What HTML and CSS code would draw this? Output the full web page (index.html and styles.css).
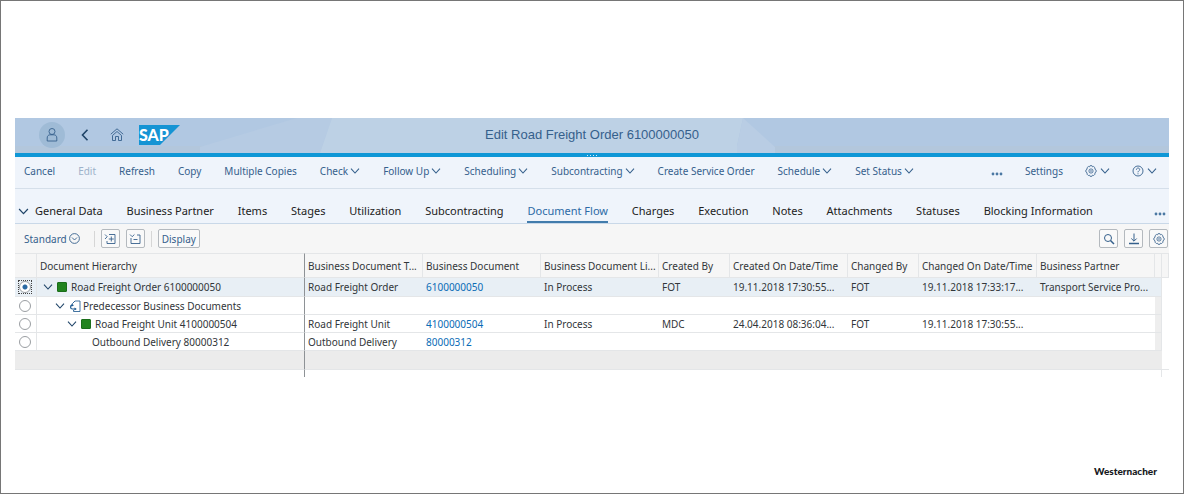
FILE: index.html
```html
<!DOCTYPE html>
<html lang="en">
<head>
<meta charset="utf-8">
<title>Edit Road Freight Order 6100000050</title>
<link rel="stylesheet" href="styles.css">
</head>
<body>
<svg class="defs" aria-hidden="true">
  <symbol id="chev" viewBox="0 0 10 6"><path d="M1 .7l4 4.3 4-4.3" fill="none" stroke="currentColor" stroke-width="1.1"/></symbol>
  <symbol id="gear" viewBox="0 0 12 12"><g fill="none" stroke="currentColor" stroke-width=".8"><path d="M5 .7h2l.5 1.1 1.2-.3 1.4 1.4-.3 1.2 1.3.9v2l-1.3.9.3 1.2-1.4 1.4-1.2-.3L7 11.3H5l-.5-1.1-1.2.3-1.4-1.4.3-1.2L.9 7V5l1.3-.9-.3-1.2 1.4-1.4 1.2.3z"/><circle cx="6" cy="6" r="2.1"/><circle cx="6" cy="6" r=".4"/></g></symbol>
  <symbol id="dots" viewBox="0 0 12 4"><g fill="currentColor"><circle cx="2" cy="2" r="1.4"/><circle cx="6" cy="2" r="1.4"/><circle cx="10" cy="2" r="1.4"/></g></symbol>
</svg>
<div class="slide">
  <main class="app">
    <header class="shell">
      <svg class="shell-bg" viewBox="0 0 1154 35" preserveAspectRatio="none" aria-hidden="true">
        <path d="M185 29L282 0h35l-12 35H185z" fill="#b6cbe3"/>
        <path d="M317 0h411l-6 28v7H305z" fill="#bdd1e5"/>
        <path d="M728 0l32 29v6h-38v-7z" fill="#b9cde4"/>
      </svg>
      <nav class="shell-nav">
        <button class="avatar" aria-label="User"><svg width="14" height="16" viewBox="0 0 14 16"><g fill="none" stroke="currentColor" stroke-width=".9"><circle cx="7" cy="4.5" r="3"/><path d="M2.2 14V11c0-2 1-3 2.700-3.200h4.200C10.800 8 11.800 9 11.800 11v3z"/></g></svg></button>
        <button class="bare back" aria-label="Back"><svg width="8" height="12" viewBox="0 0 8 12"><path d="M6.500 .8L1.500 6l5 5.200" fill="none" stroke="currentColor" stroke-width="1.600"/></svg></button>
        <button class="bare" aria-label="Home"><svg width="14" height="14" viewBox="0 0 14 14"><g fill="none" stroke="currentColor" stroke-width=".9"><path d="M.8 6.200L7 .8l6.200 5.400M2.500 7.500V12.500h3V8.500h3v4h3V7.500L7 3.500z"/></g></svg></button>
        <svg class="logo" width="41" height="20" viewBox="0 0 41 20" role="img" aria-label="SAP"><path d="M0 0h41L21 20H0z" fill="#1594d4"/><text class="logo-text" x="0" y="16">SAP</text></svg>
      </nav>
      <h1 class="title">Edit Road Freight Order 6100000050</h1>
    </header>
    <div class="band"><i></i><i></i><i></i><i></i></div>

    <div class="actions">
      <div class="action-list">
        <button class="bare">Cancel</button>
        <button class="bare" disabled>Edit</button>
        <button class="bare">Refresh</button>
        <button class="bare">Copy</button>
        <button class="bare">Multiple Copies</button>
        <button class="bare">Check<svg class="chev"><use href="#chev"/></svg></button>
        <button class="bare">Follow Up<svg class="chev"><use href="#chev"/></svg></button>
        <button class="bare">Scheduling<svg class="chev"><use href="#chev"/></svg></button>
        <button class="bare">Subcontracting<svg class="chev"><use href="#chev"/></svg></button>
        <button class="bare">Create Service Order</button>
        <button class="bare">Schedule<svg class="chev"><use href="#chev"/></svg></button>
        <button class="bare">Set Status<svg class="chev"><use href="#chev"/></svg></button>
      </div>
      <div class="action-end">
        <button class="bare more" aria-label="More"><svg class="dots"><use href="#dots"/></svg></button>
        <button class="bare">Settings</button>
        <button class="bare" aria-label="Configuration"><svg class="ico"><use href="#gear"/></svg><svg class="chev"><use href="#chev"/></svg></button>
        <button class="bare" aria-label="Help"><svg class="ico" viewBox="0 0 12 12"><g fill="none" stroke="currentColor" stroke-width=".9"><circle cx="6" cy="6" r="5"/><path d="M4.400 4.700c0-2.200 3.300-2.200 3.300-.1C7.700 5.800 6 5.900 6 7.300M6 8.300v1"/></g></svg><svg class="chev"><use href="#chev"/></svg></button>
      </div>
    </div>

    <nav class="tabs">
      <button class="bare expand" aria-label="Expand"><svg class="tabchev"><use href="#chev"/></svg></button>
      <div class="tab-list">
        <a href="#">General Data</a>
        <a href="#">Business Partner</a>
        <a href="#">Items</a>
        <a href="#">Stages</a>
        <a href="#">Utilization</a>
        <a href="#">Subcontracting</a>
        <a href="#" class="active" aria-current="page">Document Flow</a>
        <a href="#">Charges</a>
        <a href="#">Execution</a>
        <a href="#">Notes</a>
        <a href="#">Attachments</a>
        <a href="#">Statuses</a>
        <a href="#">Blocking Information</a>
      </div>
      <button class="bare more" aria-label="More tabs"><svg class="dots"><use href="#dots"/></svg></button>
    </nav>

    <div class="tools">
      <button class="bare view">Standard<svg width="11" height="11" viewBox="0 0 11 11"><g fill="none" stroke="currentColor" stroke-width=".9"><circle cx="5.500" cy="5.500" r="4.900"/><path d="M3 4.500l2.500 2.500L8 4.500"/></g></svg></button>
      <span class="rule"></span>
      <button class="box" aria-label="Expand all"><svg class="ico" viewBox="0 0 12 12"><path d="M5 1.500h6v9H3V8M1 1.500L3.200 3.700 1 6M7.300 3.500v5M4.800 6h5" fill="none" stroke="currentColor" stroke-width=".9"/></svg></button>
      <button class="box" aria-label="Collapse all"><svg class="ico" viewBox="0 0 12 12"><path d="M8 2h3v8.500H2V5M1 1.500l2.200 2.200 2.200-2.200M4.500 6.500h4" fill="none" stroke="currentColor" stroke-width=".9"/></svg></button>
      <span class="rule near"></span>
      <button class="box wide">Display</button>
      <span class="spacer"></span>
      <button class="box" aria-label="Search"><svg class="ico" viewBox="0 0 12 12"><g fill="none" stroke="currentColor"><circle cx="5" cy="5" r="3.500"/><path d="M7.500 7.500L11 11" stroke-width="1.500"/></g></svg></button>
      <button class="box" aria-label="Export"><svg class="ico" viewBox="0 0 12 12"><path d="M6 .5v7.500M3.300 5.500L6 8.200l2.700-2.700" fill="none" stroke="currentColor"/><path d="M1 10.500h10" stroke="currentColor" stroke-width="1.500"/></svg></button>
      <button class="box" aria-label="Table settings"><svg class="ico"><use href="#gear"/></svg></button>
    </div>

    <div class="grid">
      <table class="docs">
        <colgroup><col class="c-sel"><col><col class="c-l"><col class="c-l"><col class="c-l"><col class="c-s"><col class="c-l"><col class="c-s"><col class="c-l"><col class="c-l"><col class="c-bar"><col class="c-edge"></colgroup>
        <thead>
          <tr><th></th><th class="hier">Document Hierarchy</th><th>Business Document T...</th><th>Business Document</th><th>Business Document Li...</th><th>Created By</th><th>Created On Date/Time</th><th>Changed By</th><th>Changed On Date/Time</th><th>Business Partner</th><th class="bar"></th><th></th></tr>
        </thead>
        <tbody>
          <tr class="selected"><td class="sel"><label class="focus"><input type="radio" name="row" aria-label="Road Freight Order 6100000050" checked></label></td><td class="hier"><div class="node l1"><svg class="treechev"><use href="#chev"/></svg><span class="sq"></span>Road Freight Order 6100000050</div></td><td>Road Freight Order</td><td><a href="#">6100000050</a></td><td>In Process</td><td>FOT</td><td>19.11.2018 17:30:55...</td><td>FOT</td><td>19.11.2018 17:33:17...</td><td>Transport Service Pro...</td><td class="bar"></td><td class="edge"></td></tr>
          <tr><td class="sel"><input type="radio" name="row" aria-label="Predecessor Business Documents"></td><td class="hier"><div class="node l2"><svg class="treechev"><use href="#chev"/></svg><svg class="doc" viewBox="0 0 12 12"><path d="M6 1h5v10.500H4.500V10" fill="none" stroke="#2f6496" stroke-width=".9"/><path d="M6 1L3.500 3.500v1" fill="none" stroke="#2f6496"/><path d="M6.500 9H3.500C1 9 1 5.500 3 5.200" fill="none" stroke="#1f5b91" stroke-width="1.200"/><path d="M2.500 3.800L5 5.300 2.500 6.800zM5.500 7.500L7.800 9 5.500 10.500z" fill="#1f5b91"/></svg>Predecessor Business Documents</div></td><td></td><td></td><td></td><td></td><td></td><td></td><td></td><td></td><td class="bar"></td><td class="edge"></td></tr>
          <tr><td class="sel"><input type="radio" name="row" aria-label="Road Freight Unit 4100000504"></td><td class="hier"><div class="node l3"><svg class="treechev"><use href="#chev"/></svg><span class="sq"></span>Road Freight Unit 4100000504</div></td><td>Road Freight Unit</td><td><a href="#">4100000504</a></td><td>In Process</td><td>MDC</td><td>24.04.2018 08:36:04...</td><td>FOT</td><td>19.11.2018 17:30:55...</td><td></td><td class="bar"></td><td class="edge"></td></tr>
          <tr><td class="sel"><input type="radio" name="row" aria-label="Outbound Delivery 80000312"></td><td class="hier"><div class="node l4">Outbound Delivery 80000312</div></td><td>Outbound Delivery</td><td><a href="#">80000312</a></td><td></td><td></td><td></td><td></td><td></td><td></td><td class="bar"></td><td class="edge"></td></tr>
        </tbody>
        <tfoot>
          <tr class="scroll"><td></td><td class="hier"></td><td colspan="9"></td><td class="edge"></td></tr>
          <tr class="tail"><td></td><td class="hier"></td><td colspan="9" class="tail-end"></td><td></td></tr>
        </tfoot>
      </table>
    </div>
  </main>
  <footer class="brand">Westernacher</footer>
</div>
</body>
</html>
```
FILE: styles.css
```css
:root {
  --ui: "Noto Sans", "Liberation Sans", sans-serif;
  --blue: #35608c;
  --text: #32363a;
  --line: #e4e6e8;
}
* { box-sizing: border-box; }
body { margin: 0; background: #fff; color: var(--text); font: 10px/16px var(--ui); }
.defs { position: absolute; width: 0; height: 0; }
.slide { min-height: 100vh; display: flex; flex-direction: column; border: 1px solid #767676; padding: 117px 14px 14px; }
button { font: inherit; color: inherit; margin: 0; cursor: pointer; white-space: nowrap; }
a { text-decoration: none; color: inherit; }
svg { flex: none; }
.bare { display: flex; align-items: center; gap: 2px; border: 0; padding: 0; background: none; }
.bare:disabled { color: #9db2ca; }

.shell { position: relative; display: grid; grid-template-columns: 1fr auto 1fr; align-items: center; height: 35px; padding: 0 24px 2px; background: linear-gradient(#b1c8e2 28px, #b3c7dc 28px); color: var(--blue); }
.shell-bg { position: absolute; inset: 0; width: 100%; height: 100%; }
.shell-nav { position: relative; display: flex; align-items: center; }
.avatar { display: grid; place-items: center; width: 26px; height: 26px; padding: 0; border: 0; border-radius: 50%; background: #9fbbd6; }
.back { margin: 0 21px 0 16px; color: #1f4468; }
.logo { margin-left: 15px; }
.logo-text { font: 900 16px Lato, sans-serif; fill: #fff; }
.title { position: relative; margin: 0; font: 400 13px/16px "Liberation Sans", Arial, sans-serif; }

.band { display: flex; justify-content: center; align-items: center; gap: 2px; height: 4px; background: #0f97d6; }
.band i { width: 1px; height: 1px; background: #d4ecf8; }

.actions { display: flex; justify-content: space-between; height: 32px; padding: 0 12px 4px 9px; background: #eff4fb; border-bottom: 1px solid #d5dfea; color: var(--blue); }
.action-list { display: flex; justify-content: space-between; flex: 0 1 890px; }
.action-end { display: flex; gap: 22px; }
.action-end .bare { gap: 3px; }
.chev { width: 10px; height: 6px; }
.ico { width: 12px; height: 12px; }
.dots { width: 12px; height: 4px; }
.more { padding-top: 6px; color: #4b78a3; }

.tabs { display: flex; align-items: stretch; height: 35px; padding: 0 3px; background: #eff4fb; border-bottom: 1px solid #c9d8e8; font-size: 11px; }
.expand { width: 17px; padding-top: 10px; color: #1f4468; }
.tabchev { width: 11px; height: 7px; }
.tab-list { display: flex; justify-content: space-between; flex: 0 1 1058px; }
.tab-list a { display: flex; align-items: flex-end; padding-bottom: 2px; border-bottom: 2px solid transparent; white-space: nowrap; color: #222; }
.tab-list .active { color: #2d6aa6; border-color: #427cac; }
.tabs .more { margin-left: auto; padding-top: 16px; }

.tools { display: flex; align-items: center; gap: 6px; height: 29px; padding: 0 1px 0 9px; background: #f6f6f6; color: var(--blue); }
.rule { width: 1px; height: 16px; margin: 0 0 0 8px; background: #d6d6d6; }
.near { margin: 0; }
.box { display: grid; place-items: center; width: 19px; height: 19px; padding: 0; border: 1px solid #b4b9be; border-radius: 2px; background: #f9f9f9; }
.wide { width: auto; padding: 0 3px; }
.spacer { flex: 1; }

.docs { width: 100%; table-layout: fixed; border-collapse: separate; border-spacing: 0; }
.c-sel { width: 22px; }
.c-l { width: 118px; }
.c-s { width: 71px; }
.c-bar { width: 7px; }
.c-edge { width: 7px; }
.docs th:nth-child(2) { padding-left: 3px; }
.docs th, .docs td { height: 18px; padding: 0 0 0 3px; overflow: hidden; white-space: nowrap; text-align: left; font-weight: 400; line-height: 16px; border-bottom: 1px solid var(--line); }
.docs th { height: 25px; background: #f6f6f6; border-top: 1px solid var(--line); border-right: 1px solid var(--line); }
.docs .selected td { height: 19px; background: #e8eff5; }
.docs tbody td:first-child { border-right: 1px solid var(--line); }
.docs .sel { padding: 0 0 0 3px; }
.docs .hier { border-right: 1px solid #8e9296; }
.docs .bar { padding: 0; border-right: 1px solid var(--line); background: #eee; }
.docs th.bar { background: #f6f6f6; }
.docs .edge, .docs .selected .edge { padding: 0; background: #fff; border-bottom: 0; }
.docs .scroll td { height: 19px; background: #ececec; }
.docs .scroll .edge { background: #fff; border-bottom: 1px solid var(--line); }
.docs .tail td { height: 7px; border-bottom: 0; padding: 0; }
.docs .tail-end { border-right: 1px solid var(--line); }
.docs td a { color: #0a6cb6; }
.docs input { appearance: none; display: block; width: 12px; height: 12px; margin: 0 1px; border: 1px solid #9a9ea2; border-radius: 50%; background: #fff; }
.docs input:checked { background: radial-gradient(circle, #2b6aa3 2px, #fff 3px); margin: 0; }
.focus { display: grid; place-items: center; width: 14px; height: 14px; border: 1px dotted #444; }
.node { display: flex; align-items: center; height: 17px; }
.treechev { width: 10px; height: 6px; margin-right: 4px; color: #1f4468; }
.sq { width: 10px; height: 10px; margin-right: 4px; background: #22841f; border: 1px solid #1b6e1b; border-radius: 1px; }
.doc { width: 12px; height: 12px; margin-right: 2px; }
.l1 { padding-left: 3px; }
.l2 { padding-left: 15px; }
.l3 { padding-left: 27px; }
.l4 { padding-left: 52px; }

.brand { margin-top: auto; padding-right: 12px; text-align: right; font: 900 10px/16px Lato, sans-serif; color: #16181c; }
```
